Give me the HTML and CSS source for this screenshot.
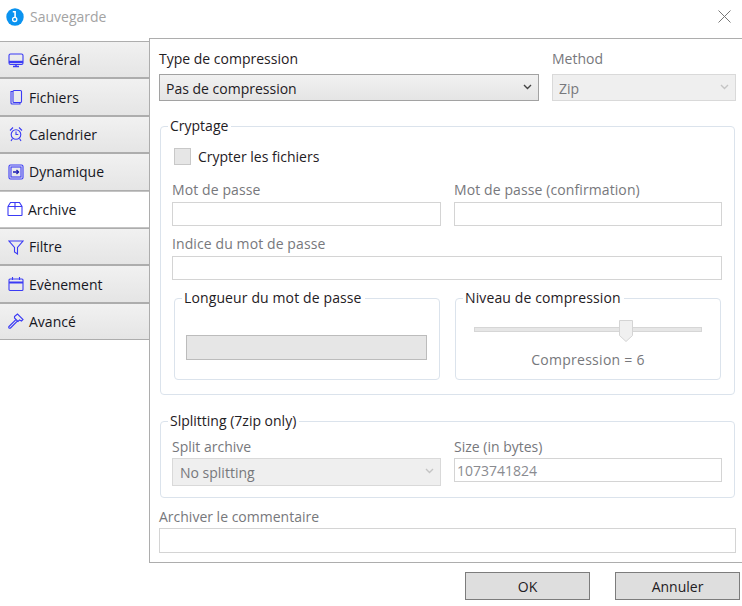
FILE: index.html
```html
<!DOCTYPE html>
<html lang="fr">
<head>
    <meta charset="UTF-8">
    <meta name="viewport" content="width=device-width, initial-scale=1.0">
    <title>Sauvegarde</title>
    <link rel="stylesheet" href="styles.css">
</head>
<body>
    <!-- Title bar -->
    <div id="titlebar">
        <svg class="logo" viewBox="0 0 18 18" width="18" height="18">
            <circle cx="9" cy="9" r="8.7" fill="#0a93f0"/>
            <circle cx="8.7" cy="11.4" r="2.1" fill="none" stroke="#fff" stroke-width="1.3"/>
            <path d="M6.800 3.800h2.300v5.400" fill="none" stroke="#fff" stroke-width="1.6"/>
        </svg>
        <span class="app-title">Sauvegarde</span>
        <svg class="close" viewBox="0 0 13 13" width="13" height="13">
            <path d="M.5.5l12 12M12.5.5l-12 12" stroke="#777" fill="none"/>
        </svg>
    </div>

    <div id="main">
        <!-- Tabs -->
        <div id="tabs">
            <div class="tab">
                <svg class="icon" viewBox="0 0 16 16"><rect x="1" y="2" width="14" height="10.500" rx="1.500"/><path d="M1 10h14" stroke-width="2.400"/><path d="M5 14.500h6M8 12.500v2" stroke-width="1.500"/></svg>
                Général
            </div>
            <div class="tab">
                <svg class="icon" viewBox="0 0 16 16"><rect x="5" y="1.500" width="8.500" height="12" rx="1"/><path d="M5 2.500H3v11.500a1 1 0 0 0 1 1h8v-1.500"/></svg>
                Fichiers
            </div>
            <div class="tab">
                <svg class="icon" viewBox="0 0 16 16"><circle cx="8" cy="8.500" r="4.800"/><path d="M8 5.500v3h2.300M2 4.500l3-3M14 4.500l-3-3M4.500 12.500L3 15M11.500 12.500L13 15"/></svg>
                Calendrier
            </div>
            <div class="tab">
                <svg class="icon" viewBox="0 0 16 16"><rect x="1" y="1" width="14" height="14" rx="1.500"/><rect x="3" y="3" width="10" height="10"/><path d="M5 8h5.500" stroke-width="1.500" stroke="#1a1ab0"/><path d="M8.500 6l2 2-2 2" stroke-width="1.300" stroke="#1a1ab0"/></svg>
                Dynamique
            </div>
            <div class="tab active">
                <svg class="icon" viewBox="0 0 16 16"><path d="M1 5.500L3.500 1.500h9L15 5.500V14a.5.5 0 0 1-.5.5h-13A.5.5 0 0 1 1 14zM1 5.500h14M8 1.500v7"/></svg>
                Archive
            </div>
            <div class="tab">
                <svg class="icon" viewBox="0 0 16 16"><path d="M1 2h14L9.500 8.500V15l-3-2V8.500z"/></svg>
                Filtre
            </div>
            <div class="tab">
                <svg class="icon" viewBox="0 0 16 16"><rect x="1" y="3" width="14" height="11.500" rx="1"/><path d="M1 6.500h14" stroke-width="2"/><path d="M4.500 1v3M11.500 1v3"/></svg>
                Evènement
            </div>
            <div class="tab">
                <svg class="icon" viewBox="0 0 16 16"><path d="M1 13.500L8 6.500l1.500 1.500-7 7a1 1 0 0 1-1.500-1.500zM6.500 3.500L9.500 1l5.500 5.500-1.500 1.500-2-1-1.500 1.500-3.500-3.500z"/></svg>
                Avancé
            </div>
        </div>

        <!-- Archive panel -->
        <div id="panel">
            <div class="top-row">
                <div class="field type-field">
                    <label class="on">Type de compression</label>
                    <div class="select-wrap">
                        <select class="select-main"><option>Pas de compression</option></select>
                        <svg class="chevron dark" viewBox="0 0 9 6"><path d="M1 1l3.500 3.500L8 1"/></svg>
                    </div>
                </div>
                <div class="field method-field">
                    <label>Method</label>
                    <div class="select-wrap">
                        <select disabled><option>Zip</option></select>
                        <svg class="chevron" viewBox="0 0 9 6"><path d="M1 1l3.500 3.500L8 1"/></svg>
                    </div>
                </div>
            </div>

            <fieldset class="group crypt">
                <legend>Cryptage</legend>
                <div class="check-row">
                    <span class="checkbox"></span>
                    <span class="on">Crypter les fichiers</span>
                </div>
                <div class="two-col pw-row">
                    <div class="field"><label>Mot de passe</label><input type="text" disabled></div>
                    <div class="field"><label>Mot de passe (confirmation)</label><input type="text" disabled></div>
                </div>
                <div class="field hint"><label>Indice du mot de passe</label><input type="text" disabled></div>
                <div class="sub-row">
                    <fieldset class="group sub">
                        <legend>Longueur du mot de passe</legend>
                        <div class="progress"></div>
                    </fieldset>
                    <fieldset class="group sub">
                        <legend>Niveau de compression</legend>
                        <div class="slider">
                            <svg class="thumb" viewBox="0 0 14 22" width="14" height="22">
                                <path d="M.5.500h13v15l-6.500 6-6.500-6z" fill="#f0f0f0" stroke="#d4d4d4"/>
                            </svg>
                        </div>
                        <div class="slider-value">Compression = 6</div>
                    </fieldset>
                </div>
            </fieldset>

            <fieldset class="group split">
                <legend>Slplitting (7zip only)</legend>
                <div class="two-col">
                    <div class="field">
                        <label>Split archive</label>
                        <div class="select-wrap tall">
                            <select disabled><option>No splitting</option></select>
                            <svg class="chevron" viewBox="0 0 9 6"><path d="M1 1l3.500 3.500L8 1"/></svg>
                        </div>
                    </div>
                    <div class="field"><label>Size (in bytes)</label><input type="text" value="1073741824" disabled></div>
                </div>
            </fieldset>

            <div class="field comment">
                <label>Archiver le commentaire</label>
                <input type="text" disabled>
            </div>
        </div>
    </div>

    <!-- Footer buttons -->
    <div id="footer">
        <button>OK</button>
        <button>Annuler</button>
    </div>
</body>
</html>
```

FILE: styles.css
```css
* {
    box-sizing: border-box;
}
body {
    margin: 0;
    width: 742px;
    height: 606px;
    overflow: hidden;
    background-color: white;
    font-family: "Open Sans", "Noto Sans", sans-serif;
    font-size: 14px;
    color: #77787c;
}

/* Title bar */
#titlebar {
    height: 38px;
    display: flex;
    align-items: center;
    padding: 0 11px 5px 6px;
}
.app-title {
    margin-left: 6px;
    color: #a3a3a3;
}
.close {
    margin-left: auto;
}

#main {
    display: flex;
    height: 525px;
}

/* Tabs */
#tabs {
    width: 149px;
    padding-top: 3px;
    flex-shrink: 0;
}
.tab {
    height: 37.4px;
    display: flex;
    align-items: center;
    gap: 5px;
    padding-left: 8px;
    border-top: 1px solid #adadad;
    border-bottom: 1px solid #adadad;
    background: linear-gradient(#f1f1f1, #e5e5e5);
    color: #17171f;
}
.tab.active {
    padding-left: 7px;
    background: white;
    border-top-color: #c4c4c4;
    border-bottom-color: #c4c4c4;
}
.icon {
    width: 16px;
    height: 16px;
    fill: none;
    stroke: #3b3bf5;
    stroke-width: 1.1;
    flex-shrink: 0;
}

/* Panel */
#panel {
    flex: 1;
    border-top: 1px solid #adadad;
    border-left: 1px solid #adadad;
    border-bottom: 1px solid #adadad;
    padding: 10px 6px 0 9px;
}
.on {
    color: #1f2024;
}
.field {
    display: flex;
    flex-direction: column;
    min-width: 0;
}
.field label {
    line-height: 20px;
    height: 20px;
    margin-bottom: 5px;
}
.top-row {
    display: flex;
    gap: 13px;
}
.type-field {
    width: 380px;
}
.method-field {
    width: 184px;
}
.select-wrap {
    position: relative;
    height: 27px;
}
.select-wrap.tall {
    height: 28px;
}
select {
    appearance: none;
    width: 100%;
    height: 100%;
    padding: 2px 0 0 6px;
    font: inherit;
    color: #77787c;
    opacity: 1;
    background: #efefef;
    border: 1px solid #d9d9d9;
    border-radius: 0;
}
.tall select {
    padding: 0 0 0 7px;
}
.select-main {
    color: #1f2024;
    background: linear-gradient(#f1f1f1, #e5e5e5);
    border-color: #a2a2a2;
}
.chevron {
    position: absolute;
    right: 7px;
    top: 10px;
    width: 9px;
    height: 6px;
    fill: none;
    stroke: #c4c4c4;
    stroke-width: 1.4;
}
.chevron.dark {
    stroke: #444;
}
input[type="text"] {
    width: 100%;
    height: 24px;
    padding: 0 0 0 2px;
    font: inherit;
    color: #8a8b90;
    background: white;
    border: 1px solid #d4d4d4;
    border-radius: 0;
}

/* Group boxes */
.group {
    margin: 0;
    min-width: 0;
    border: 1px solid #dbe3ec;
    border-radius: 4px;
}
.group legend {
    padding: 0 3px 0 2px;
    line-height: 20px;
    color: #1f2024;
}
.crypt {
    margin: 15px 1px 0;
    height: 279px;
    padding: 10px 12px 0 11px;
}
.crypt > legend,
.split > legend {
    margin-left: -4px;
}
.check-row {
    display: flex;
    align-items: center;
    gap: 7px;
    height: 20px;
    margin-left: 2px;
}
.checkbox {
    width: 17px;
    height: 17px;
    background: #e6e6e6;
    border: 1px solid #c8c8c8;
}
.two-col {
    display: grid;
    grid-template-columns: 269px 268px;
    column-gap: 13px;
}
.pw-row {
    margin-top: 14px;
}
.pw-row label,
.hint label {
    margin-bottom: 2px;
    letter-spacing: 0.1px;
}
.hint {
    margin-top: 8px;
}
.sub-row {
    display: flex;
    gap: 15px;
    margin: 8px 1px 0 2px;
}
.sub {
    width: 266px;
    height: 92px;
    padding: 0;
}
.sub legend {
    margin-left: 7px;
    letter-spacing: 0.12px;
}
.progress {
    height: 25px;
    margin: 27px 12px 0 11px;
    background: #e6e6e6;
    border: 1px solid #bcbcbc;
}
.slider {
    position: relative;
    height: 5px;
    margin: 19px 18px 0;
    background: #e6e6e6;
    border: 1px solid #d6d6d6;
}
.thumb {
    position: absolute;
    left: 63.5%;
    top: -8px;
}
.slider-value {
    margin-top: 18px;
    text-align: center;
    line-height: 20px;
    letter-spacing: 0.28px;
}
.split {
    margin: 16px 1px 0;
    height: 87px;
    padding: 6px 12px 0 11px;
}
.split label {
    margin-bottom: 1px;
}
.comment {
    margin-top: 9px;
    width: 577px;
}
.comment label {
    margin-bottom: 1px;
}
.comment input[type="text"] {
    height: 25px;
}

/* Footer */
#footer {
    display: flex;
    justify-content: flex-end;
    gap: 25px;
    padding: 9px 2px 0 0;
}
button {
    width: 125px;
    height: 28px;
    padding: 0;
    font: inherit;
    color: #1f2024;
    background: #dedede;
    border: 1px solid #7c7c7c;
}
```
